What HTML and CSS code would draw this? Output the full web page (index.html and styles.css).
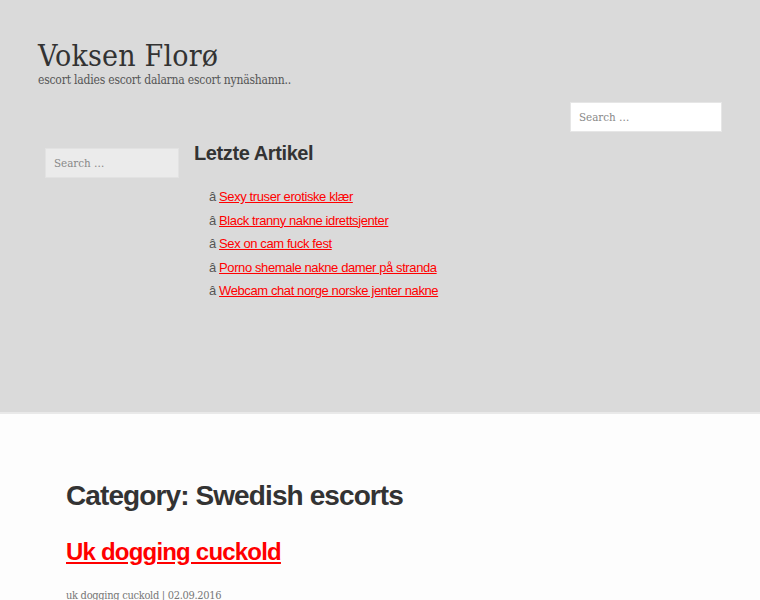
FILE: index.html
```html
<!DOCTYPE html>
<html lang="no">
<head>
  <meta charset="UTF-8" />
  <title>Voksen Florø</title>
  <link rel="stylesheet" href="styles.css">
</head>
<body>

<header class="site-header">
  <div class="branding">
    <div class="site-title">Voksen Florø</div>
    <div class="site-description">escort ladies escort dalarna escort nynäshamn..</div>
  </div>

  <div class="header-search">
    <input type="search" placeholder="Search …" />
  </div>

  <div class="widgets">
    <div class="widget-search">
      <input type="search" placeholder="Search …" />
    </div>
    <div class="widget-recent">
      <h2>Letzte Artikel</h2>
      <ul>
        <li>â <a href="#">Sexy truser erotiske klær</a></li>
        <li>â <a href="#">Black tranny nakne idrettsjenter</a></li>
        <li>â <a href="#">Sex on cam fuck fest</a></li>
        <li>â <a href="#">Porno shemale nakne damer på stranda</a></li>
        <li>â <a href="#">Webcam chat norge norske jenter nakne</a></li>
      </ul>
    </div>
  </div>
</header>

<main class="content">
  <h1 class="page-title">Category: Swedish escorts</h1>
  <article class="post">
    <h2 class="entry-title"><a href="#">Uk dogging cuckold</a></h2>
    <div class="entry-meta">uk dogging cuckold | 02.09.2016</div>
  </article>
</main>

</body>
</html>
```

FILE: styles.css
```css
body {
  margin: 0;
  padding: 0;
  background: #fdfdfd;
  font-family: 'DejaVu Serif', serif;
  font-stretch: condensed;
  color: #333;
}

.site-header {
  background: #dadada;
  height: 414px;
  border-bottom: 2px solid #e9e9e9;
  padding: 38px 38px 0 38px;
  box-sizing: border-box;
}

.site-title {
  font-size: 30px;
  line-height: 35px;
  color: #333;
  letter-spacing: 0.2px;
}

.site-description {
  font-size: 12px;
  line-height: 14px;
  color: #555;
  letter-spacing: -0.2px;
}

.header-search {
  display: flex;
  justify-content: flex-end;
  margin-top: 15px;
}

input {
  font-family: 'DejaVu Serif', serif;
  font-stretch: condensed;
  font-size: 11.5px;
  color: #777;
  box-sizing: border-box;
  height: 30px;
  padding: 0 8px;
  border: 1px solid #e6e6e6;
  outline: none;
}

input::placeholder {
  color: #888;
}

.header-search input {
  width: 152px;
  background: #fff;
}

.widgets {
  display: flex;
  gap: 15px;
  margin-top: 9px;
  padding-left: 7px;
}

.widget-search {
  padding-top: 7px;
}

.widget-search input {
  width: 134px;
  background: #ebebeb;
  border-color: #e2e2e2;
}

.widget-recent h2 {
  font-family: 'Liberation Sans', Arial, sans-serif;
  font-stretch: normal;
  font-size: 20px;
  line-height: 24px;
  margin: 0 0 20px;
  color: #333;
  letter-spacing: -0.4px;
}

.widget-recent ul {
  list-style: none;
  margin: 0;
  padding: 0 0 0 15px;
  font-family: 'Liberation Sans', Arial, sans-serif;
  font-stretch: normal;
  font-size: 13px;
  line-height: 23.6px;
  color: #555;
  letter-spacing: -0.4px;
}

.widget-recent a {
  color: #f00;
}

.content {
  padding: 65px 66px 0;
}

.page-title {
  font-family: 'Liberation Sans', Arial, sans-serif;
  font-stretch: normal;
  font-size: 28px;
  line-height: 34px;
  margin: 0;
  color: #333;
  letter-spacing: -0.9px;
}

.entry-title {
  font-family: 'Liberation Sans', Arial, sans-serif;
  font-stretch: normal;
  font-size: 24px;
  line-height: 30px;
  margin: 24px 0 0;
  letter-spacing: -0.8px;
}

.entry-title a {
  color: #f00;
}

.entry-meta {
  font-size: 11px;
  line-height: 14px;
  color: #777;
  margin-top: 22px;
  letter-spacing: -0.3px;
}
```
